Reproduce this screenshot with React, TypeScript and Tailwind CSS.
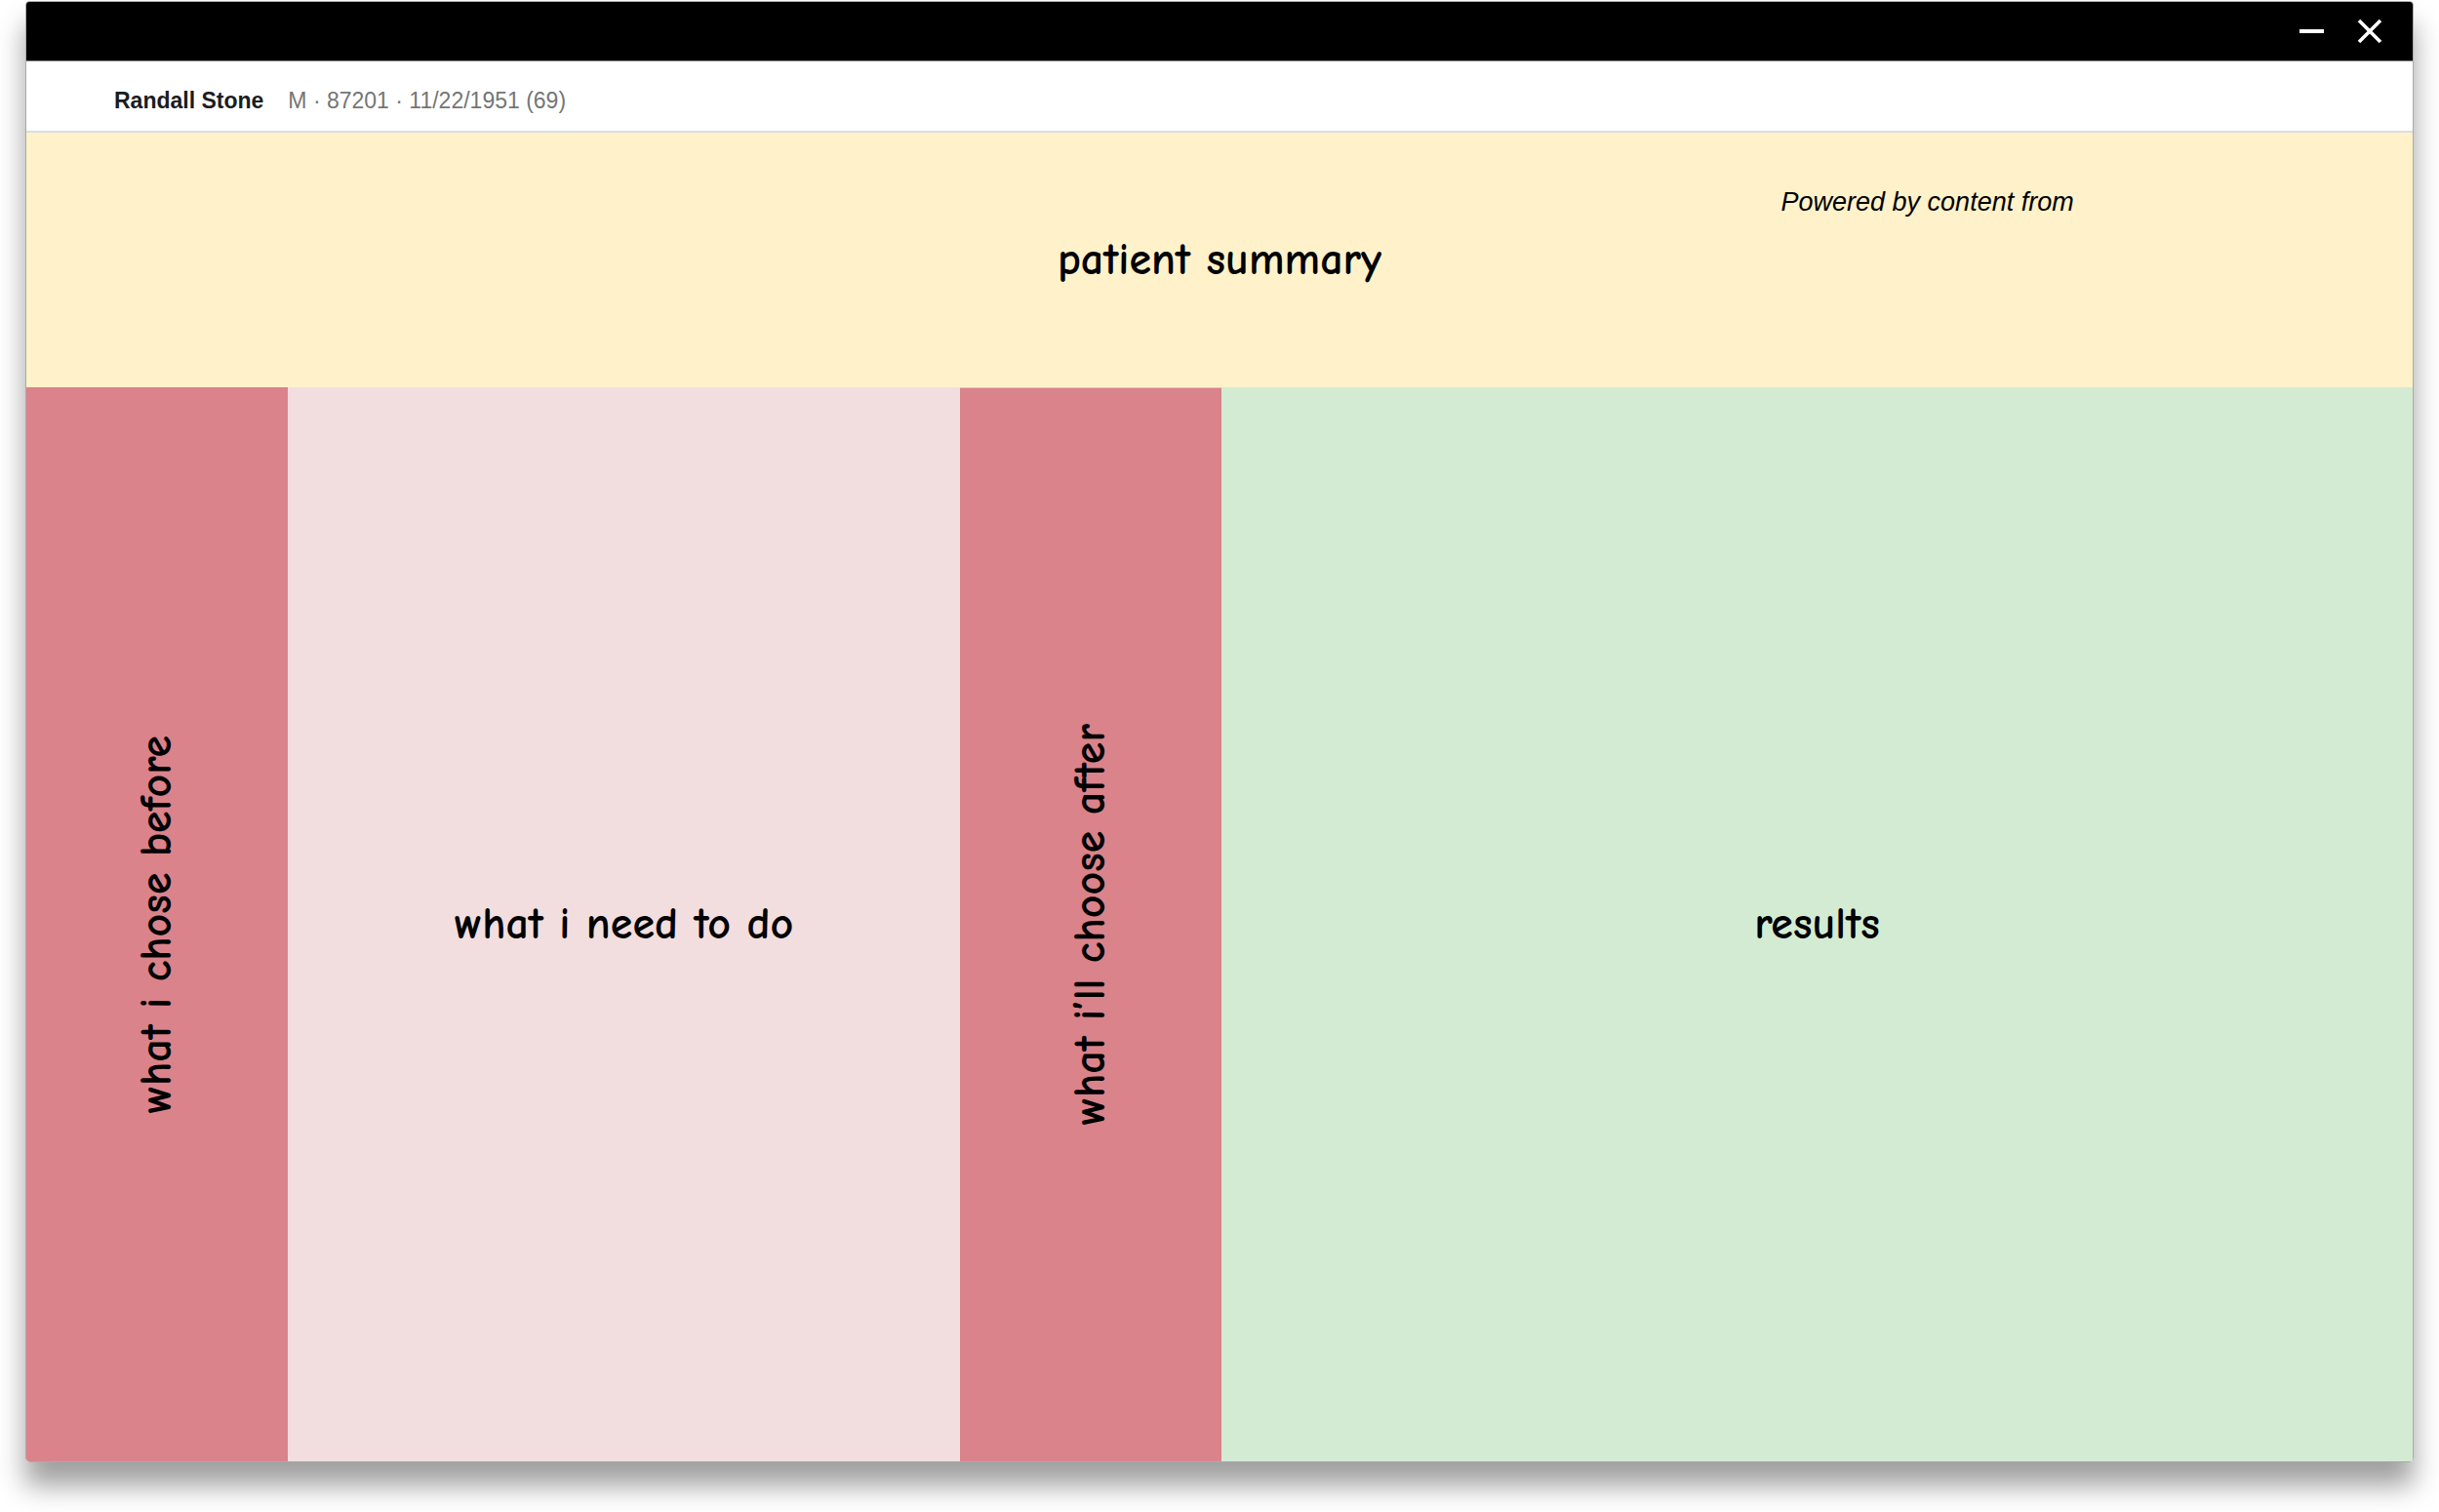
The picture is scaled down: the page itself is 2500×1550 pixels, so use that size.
import { clsx } from "clsx";

const labelClass =
    "font-['Comic_Neue','Lato',sans-serif] text-[46px] leading-[52px] font-bold text-black whitespace-nowrap [font-variant-ligatures:none]";

function VerticalPanel({ label, className }: { label: string; className?: string }) {
    return (
        <section className={clsx("flex items-center justify-center bg-[#da838b]", className)}>
            <h2 className={clsx(labelClass, "[writing-mode:vertical-rl] rotate-180")}>{label}</h2>
        </section>
    );
}

export default function App() {
    return (
        <div className="flex min-h-screen flex-col bg-white px-[26px] pt-px pb-[51px] font-['Liberation_Sans',Arial,sans-serif]">
            <div className="flex flex-1 flex-col overflow-hidden rounded-[4px] border border-[#ababab] shadow-[0_24px_28px_rgba(0,0,0,0.38)]">
                {/* Title bar */}
                <div className="flex h-[61px] items-center justify-end gap-[20px] border-b border-[#8c8c8c] bg-black pr-[24px]">
                    <button type="button" aria-label="Minimize" className="p-[6px]">
                        <svg width="28" height="28" viewBox="0 0 28 28" fill="none" stroke="white" strokeWidth="4">
                            <path d="M2 14h25" />
                        </svg>
                    </button>
                    <button type="button" aria-label="Close" className="p-[6px]">
                        <svg width="28" height="28" viewBox="0 0 28 28" fill="none" stroke="white" strokeWidth="3.6">
                            <path d="M3 3l22 22M25 3L3 25" />
                        </svg>
                    </button>
                </div>

                {/* Patient banner */}
                <header className="flex h-[73px] items-center gap-[25px] border-b-2 border-[#dcdee0] bg-white px-[90px] pt-[8px] text-[23px] leading-[28px]">
                    <h1 className="font-bold text-[#1c1c1e]">Randall Stone</h1>
                    <p className="text-[#757575]">M · 87201 · 11/22/1951 (69)</p>
                </header>

                {/* Summary */}
                <section className="relative flex h-[261px] items-center justify-center bg-[#fff2ca]">
                    <h2 className={labelClass}>patient summary</h2>
                    <p className="absolute top-[55px] right-[14.2%] text-[27px] leading-[32px] text-black italic">
                        Powered by content from
                    </p>
                </section>

                {/* Workspace */}
                <main className="grid flex-1 grid-cols-[268px_689fr_268px_1221fr]">
                    <VerticalPanel label="what i chose before" />
                    <section className="flex items-center justify-center bg-[#f2dedf]">
                        <h2 className={labelClass}>what i need to do</h2>
                    </section>
                    <VerticalPanel label="what i’ll choose after" className="border-t border-[#e8c0bc]" />
                    <section className="flex items-center justify-center bg-[#d3ebd3]">
                        <h2 className={labelClass}>results</h2>
                    </section>
                </main>
            </div>
        </div>
    );
}
